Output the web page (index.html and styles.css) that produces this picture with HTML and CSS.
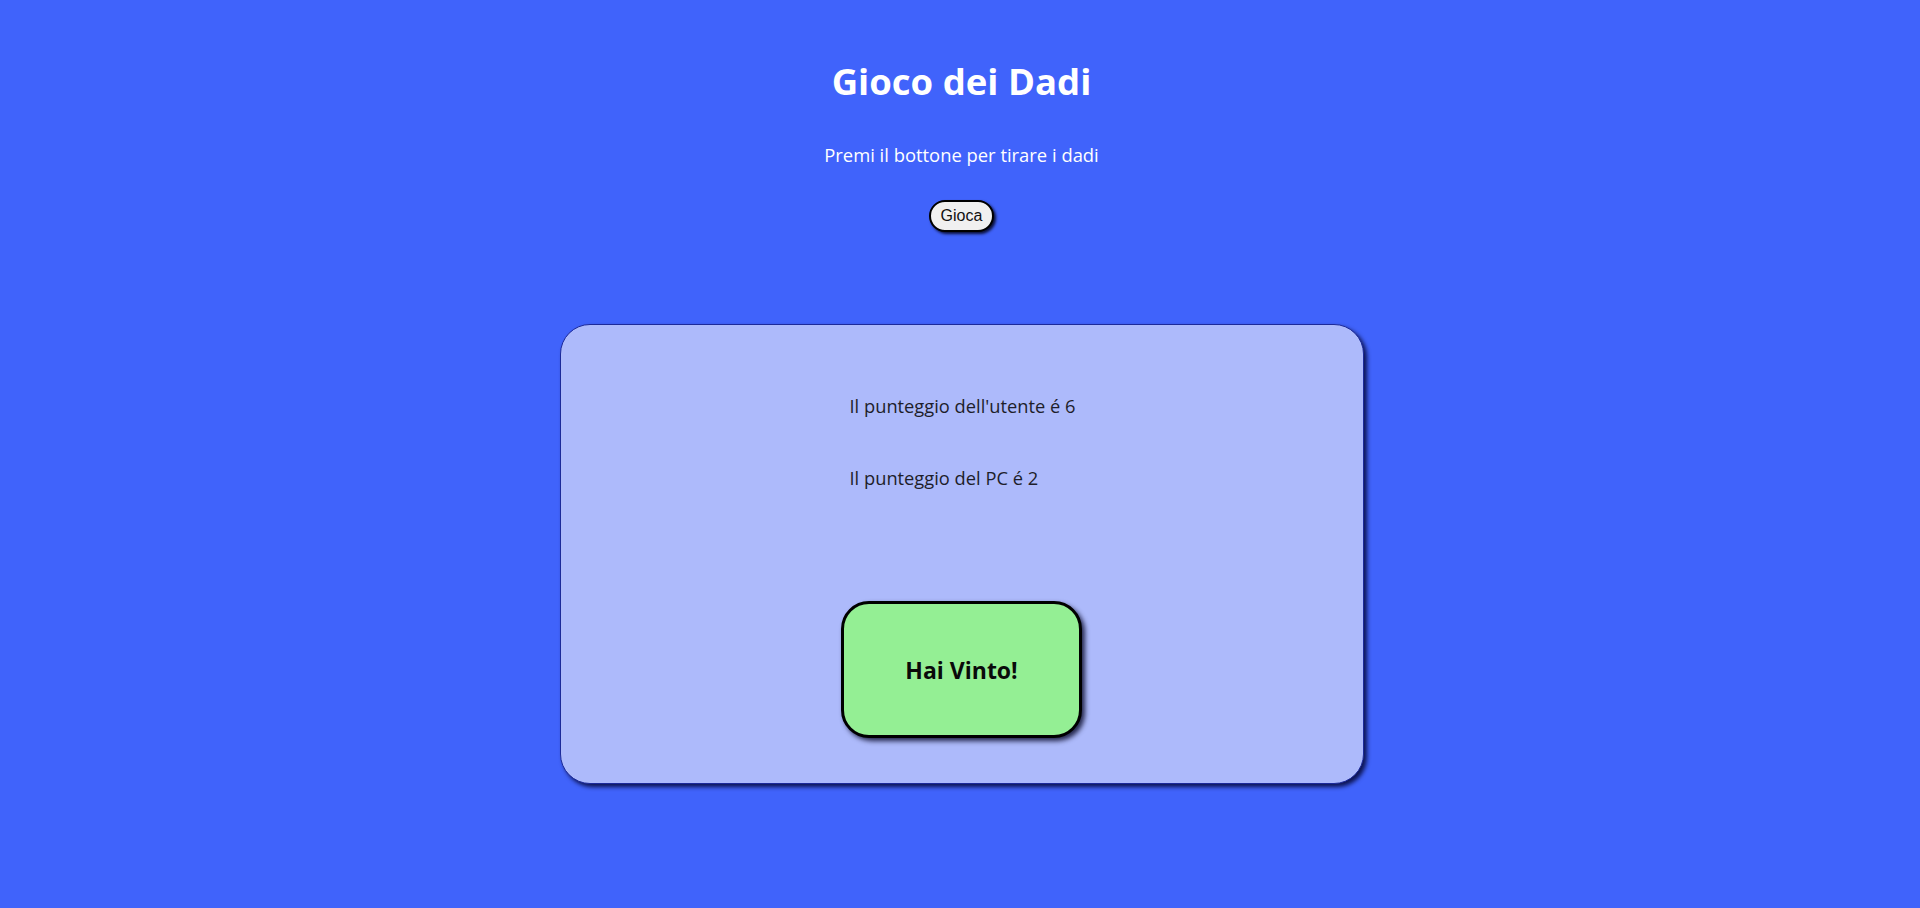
FILE: index.html
```html
<!DOCTYPE html>
<html lang="it">
<head>
<meta charset="utf-8">
<title>Gioco dei Dadi</title>
<link rel="stylesheet" href="styles.css">
</head>
<body>
<header class="top">
  <h1 class="title">Gioco dei Dadi</h1>
  <p class="subtitle">Premi il bottone per tirare i dadi</p>
  <button class="play">Gioca</button>
</header>
<main class="card">
  <div class="scores">
    <p class="score">Il punteggio dell'utente é 6</p>
    <p class="score">Il punteggio del PC é 2</p>
  </div>
  <div class="result">Hai Vinto!</div>
</main>
</body>
</html>
```

FILE: styles.css
```css
html, body {
  margin: 0;
  padding: 0;
}
body {
  background: #4063fb;
  font-family: "Open Sans", "Liberation Sans", sans-serif;
  min-height: 908px;
  overflow: hidden;
  padding-left: 3px;
}
.top {
  display: flex;
  flex-direction: column;
  align-items: center;
  padding-top: 56px;
}
.title {
  margin: 0;
  font-size: 36.5px;
  font-weight: 700;
  color: #ffffff;
  line-height: 50px;
}
.subtitle {
  margin: 35px 0 0 0;
  font-size: 18.4px;
  color: #ffffff;
  line-height: 27px;
}
.play {
  margin-top: 32px;
  font-family: "Liberation Sans", Arial, sans-serif;
  font-size: 16px;
  line-height: 18px;
  padding: 5px 10px;
  color: #111;
  background: #f0f0f0;
  border: 2px solid #000;
  border-radius: 16px;
  box-shadow: 2px 2px 3px rgba(0, 0, 20, 0.85);
}
.card {
  width: 804px;
  margin: 92px auto 0 auto;
  box-sizing: border-box;
  background: #adbafb;
  border: 1px solid #1c2a9a;
  border-radius: 30px;
  box-shadow: 3px 3px 4px rgba(0, 0, 40, 0.8);
  display: flex;
  flex-direction: column;
  align-items: center;
  padding: 67px 0 45px 0;
}
.scores {
  display: flex;
  flex-direction: column;
  gap: 45px;
  padding-left: 2px;
}
.score {
  margin: 0;
  font-size: 18.3px;
  line-height: 27px;
  color: #1e1e2a;
}
.result {
  margin-top: 110px;
  width: 241px;
  height: 137px;
  box-sizing: border-box;
  background: #94ef94;
  border: 3px solid #000;
  border-radius: 28px;
  box-shadow: 3px 3px 5px rgba(0, 0, 30, 0.8);
  display: flex;
  align-items: center;
  justify-content: center;
  font-size: 23px;
  font-weight: 700;
  color: #0a0a0a;
}
```
